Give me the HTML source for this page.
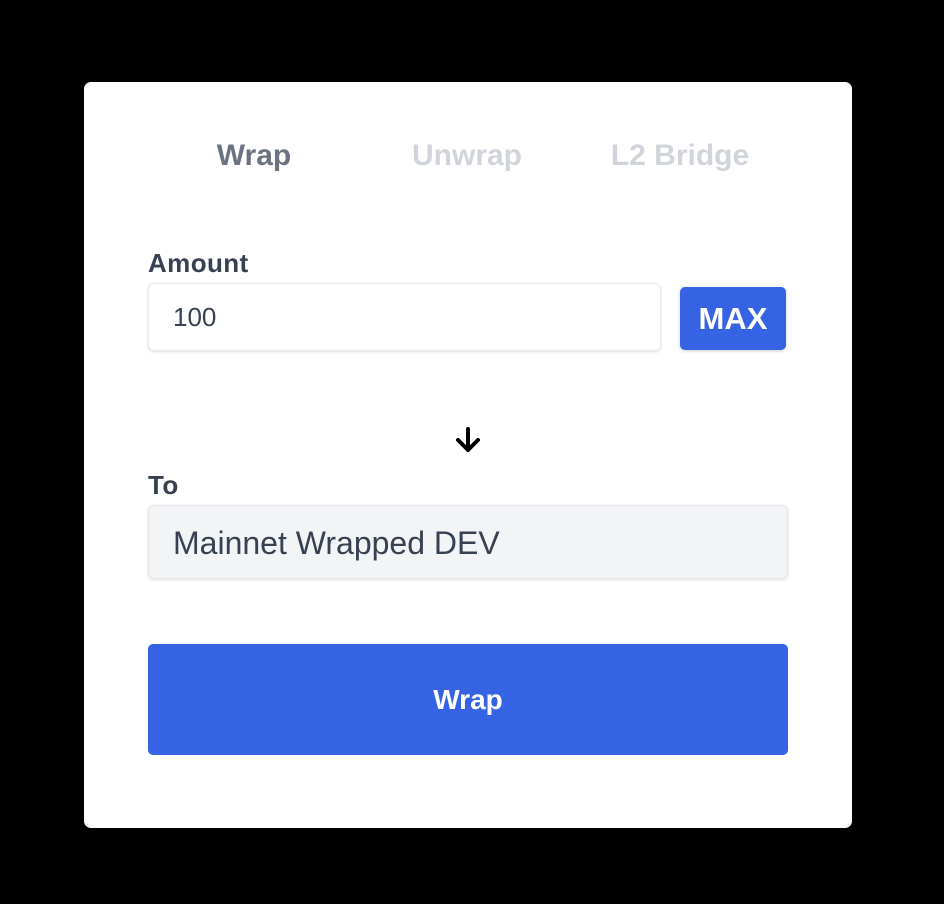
<!DOCTYPE html>
<html><head><style>
body{margin:0;width:944px;height:904px;background:#000;font-family:"Liberation Sans",sans-serif;position:relative;overflow:hidden}
.card{position:absolute;left:84px;top:82px;width:768px;height:746px;background:#fff;border-radius:7px}
.a{position:absolute}
.tab{position:absolute;top:139px;font-size:30px;font-weight:bold;transform:translateX(-50%);white-space:nowrap}
.lbl{position:absolute;left:148px;font-size:26px;font-weight:bold;color:#374151;letter-spacing:0.4px}
</style></head><body>
<div class="card"></div>
<div class="tab" style="left:254px;color:#6b7280">Wrap</div>
<div class="tab" style="left:467px;color:#d1d5db">Unwrap</div>
<div class="tab" style="left:680px;color:#d1d5db">L2 Bridge</div>
<div class="lbl" style="top:248px">Amount</div>
<div class="a" style="left:148px;top:283px;width:511px;height:66px;border:1px solid #e5e7eb;border-radius:6px;box-shadow:0 1px 3px rgba(0,0,0,.12)"></div>
<div class="a" style="left:173px;top:302px;font-size:26px;color:#374151">100</div>
<div class="a" style="left:680px;top:287px;width:106px;height:63px;background:#3563e3;border-radius:5px;color:#fff;font-size:31px;font-weight:bold;line-height:63px;text-align:center;box-shadow:0 1px 3px rgba(0,0,0,.2)">MAX</div>
<svg class="a" style="left:454px;top:426px" width="28" height="28" viewBox="0 0 28 28"><path d="M14 3V24M4 14L14 24L24 14" stroke="#000" stroke-width="4" fill="none" stroke-linecap="round" stroke-linejoin="round"/></svg>
<div class="lbl" style="top:470px">To</div>
<div class="a" style="left:148px;top:505px;width:638px;height:72px;background:#f3f4f6;border:1px solid #e5e7eb;border-radius:6px;box-shadow:0 1px 3px rgba(0,0,0,.12)"></div>
<div class="a" style="left:173px;top:525px;font-size:32px;color:#374151">Mainnet Wrapped DEV</div>
<div class="a" style="left:148px;top:644px;width:640px;height:111px;background:#3563e3;border-radius:5px;color:#fff;font-size:28px;font-weight:bold;line-height:111px;text-align:center">Wrap</div>
</body></html>
